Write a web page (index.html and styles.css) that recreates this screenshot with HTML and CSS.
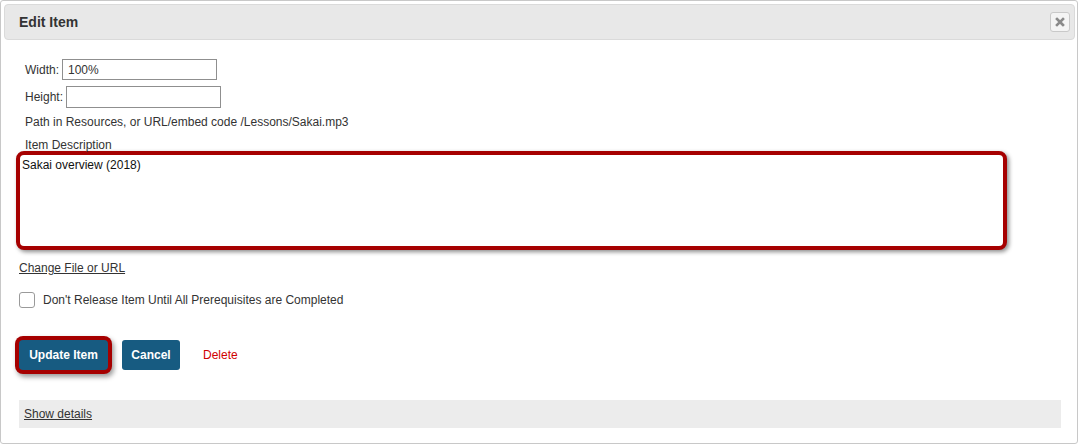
FILE: index.html
```html
<!DOCTYPE html>
<html>
<head>
<meta charset="utf-8">
<link rel="stylesheet" href="styles.css">
</head>
<body>
<div class="dialog">
  <div class="header">
    <span class="title">Edit Item</span>
    <button class="close" aria-label="Close">
      <svg width="10" height="10" viewBox="0 0 10 10"><path d="M2 2 L8 8 M8 2 L2 8" stroke="#8a8a8a" stroke-width="2.6" stroke-linecap="square"/></svg>
    </button>
  </div>
  <div class="content">
    <div class="fields">
      <div class="row row-width"><label>Width:</label><input class="text" type="text" value="100%"></div>
      <div class="row row-height"><label>Height:</label><input class="text" type="text" value=""></div>
      <div class="path">Path in Resources, or URL/embed code /Lessons/Sakai.mp3</div>
      <div class="desc-label">Item Description</div>
    </div>
    <textarea class="desc">Sakai overview (2018)</textarea>
    <a class="change" href="#">Change File or URL</a>
    <div class="check-row">
      <input type="checkbox" class="check">
      <span class="check-label">Don't Release Item Until All Prerequisites are Completed</span>
    </div>
    <div class="actions">
      <button class="btn btn-update">Update Item</button>
      <button class="btn btn-cancel">Cancel</button>
      <a class="delete" href="#">Delete</a>
    </div>
    <div class="details"><a href="#">Show details</a></div>
  </div>
</div>
</body>
</html>
```

FILE: styles.css
```css
html, body {
  margin: 0;
  padding: 0;
  background: #ffffff;
}
body {
  font-family: "Liberation Sans", Arial, sans-serif;
  font-size: 12px;
  color: #333333;
}
.dialog {
  box-sizing: border-box;
  width: 1078px;
  height: 444px;
  border: 1px solid #c8c8c8;
  border-radius: 3px;
  padding: 3px;
}
.header {
  box-sizing: border-box;
  height: 36px;
  background: #e8e8e8;
  border: 1px solid #dadada;
  border-radius: 4px;
  width: 1071px;
  display: flex;
  align-items: center;
  justify-content: space-between;
  padding: 0 4px 0 14px;
}
.title {
  font-size: 14px;
  font-weight: bold;
  color: #333333;
}
.close {
  box-sizing: border-box;
  width: 20px;
  height: 20px;
  padding: 0;
  border: 1px solid #c9c9c9;
  border-radius: 3px;
  background: #f4f4f4;
  display: flex;
  align-items: center;
  justify-content: center;
}
.content {
  padding: 0 13px 0 15px;
}
.fields {
  padding-left: 6px;
  padding-top: 19px;
}
.row {
  display: flex;
  align-items: center;
  gap: 3px;
  height: 21px;
}
.row-height {
  margin-top: 6px;
  height: 22px;
}
.text {
  box-sizing: border-box;
  width: 155px;
  height: 21px;
  border: 1px solid #8f8f8f;
  border-radius: 0;
  padding: 0 5px;
  margin: 0;
  font-family: "Liberation Sans", Arial, sans-serif;
  font-size: 12px;
  color: #333333;
  background: #fff;
}
.row-height .text {
  height: 22px;
}
.path {
  margin-top: 7px;
  line-height: 14px;
}
.desc-label {
  margin-top: 10px;
  line-height: 12px;
}
.desc {
  display: block;
  box-sizing: border-box;
  width: 991px;
  height: 99px;
  margin: 0 0 0 -3px;
  border: 4px solid #a60000;
  border-radius: 8px;
  box-shadow: 2px 2px 4px rgba(0, 0, 0, 0.45);
  padding: 3px 2px;
  font-family: "Liberation Sans", Arial, sans-serif;
  font-size: 12px;
  line-height: 14px;
  color: #111111;
  resize: none;
  outline: none;
}
.change {
  display: block;
  margin-top: 11px;
  line-height: 14px;
  color: #333333;
  text-decoration: underline;
  width: max-content;
}
.check-row {
  display: flex;
  align-items: center;
  gap: 8px;
  margin-top: 17px;
  height: 16px;
}
.check {
  appearance: none;
  -webkit-appearance: none;
  box-sizing: border-box;
  width: 16px;
  height: 16px;
  margin: 0;
  border: 1px solid #9a9a9a;
  border-radius: 3px;
  background: #fff;
}
.actions {
  display: flex;
  align-items: center;
  margin-top: 32px;
  height: 30px;
}
.btn {
  box-sizing: border-box;
  height: 30px;
  border: 0;
  border-radius: 3px;
  background: #175b81;
  color: #ffffff;
  font-family: "Liberation Sans", Arial, sans-serif;
  font-size: 12px;
  font-weight: bold;
  padding: 0;
}
.btn-update {
  width: 89px;
  box-shadow: 0 0 0 4px #a60000, 2px 3px 5px 4px rgba(0, 0, 0, 0.4);
  border-radius: 4px;
}
.btn-cancel {
  width: 58px;
  margin-left: 14px;
}
.delete {
  margin-left: 23px;
  color: #d00000;
  text-decoration: none;
}
.details {
  margin-top: 30px;
  height: 28px;
  background: #ececec;
  display: flex;
  align-items: center;
  padding-left: 5px;
}
.details a {
  color: #333333;
  text-decoration: underline;
}
```
